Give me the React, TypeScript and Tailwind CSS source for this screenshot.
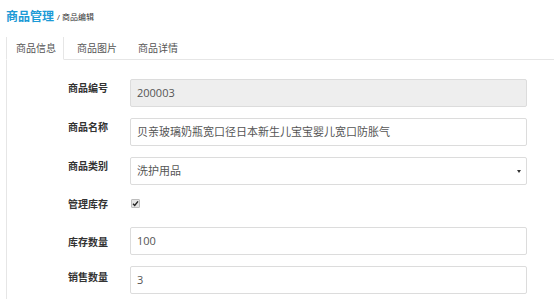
import React from "react";

const font = { fontFamily: '"Open Sans", "Noto Sans CJK SC", sans-serif' };

function Label({ text, pt }: { text: string; pt: string }) {
  return (
    <div className={`ml-[61px] w-[62px] shrink-0 text-[10px] leading-[14px] font-bold text-[#333] ${pt}`}>
      {text}
    </div>
  );
}

export default function App() {
  return (
    <div className="w-[554px] h-[299px] overflow-hidden bg-white" style={font}>
      <div className="h-[37px] pl-[6px] pt-[9px]">
        <div className="flex items-center h-[16px]">
          <span className="text-[12px] leading-[16px] font-bold text-[#1c9ad6]">商品管理</span>
          <span className="ml-[3px] text-[8px] leading-[16px] text-[#333]">/ 商品编辑</span>
        </div>
      </div>
      <ul className="ml-[6px] flex border-b border-[#e6e6e6] h-[23px]">
        <li className="w-[58px] h-[23px] -mb-px border-x border-b border-[#e6e6e6] border-b-white bg-white pl-[9px] text-[10px] leading-[22px] text-[#555]">
          商品信息
        </li>
        <li className="ml-[3px] w-[58px] h-[22px] pl-[10px] text-[10px] leading-[22px] text-[#555]">
          商品图片
        </li>
        <li className="ml-[3px] w-[58px] h-[22px] pl-[10px] text-[10px] leading-[22px] text-[#555]">
          商品详情
        </li>
      </ul>
      <div className="ml-[6px] border-l border-[#e6e6e6] pt-[19px] h-[260px]">
        <div className="flex h-[28px] mb-[11px]">
          <Label text="商品编号" pt="pt-[2px]" />
          <div className="w-[397px] h-[28px] border border-[#dcdcdc] rounded-[2px] bg-[#eeeeee] pl-[6px] text-[11px] leading-[26px] text-[#555]">
            200003
          </div>
        </div>
        <div className="flex h-[28px] mb-[11px]">
          <Label text="商品名称" pt="pt-[2px]" />
          <div className="w-[397px] h-[28px] border border-[#dcdcdc] rounded-[2px] bg-white pl-[6px] text-[11px] leading-[26px] text-[#555]">
            贝亲玻璃奶瓶宽口径日本新生儿宝宝婴儿宽口防胀气
          </div>
        </div>
        <div className="flex h-[28px] mb-[11px]">
          <Label text="商品类别" pt="pt-[2px]" />
          <div className="relative w-[397px] h-[28px] border border-[#dcdcdc] rounded-[2px] bg-white pl-[6px] text-[11px] leading-[26px] text-[#555]">
            洗护用品
            <span className="absolute right-[5px] top-[12px] w-0 h-0 border-l-[2.5px] border-r-[2.5px] border-t-[3px] border-l-transparent border-r-transparent border-t-[#333]" />
          </div>
        </div>
        <div className="flex h-[20px] mb-[11px]">
          <Label text="管理库存" pt="pt-[1px]" />
          <div className="pt-[3px] pl-[1px]">
            <span className="flex items-center justify-center w-[9px] h-[9px] rounded-[1px] border border-[#bdbdbd] bg-[#e4e4e4]">
              <svg width="7" height="7" viewBox="0 0 7 7">
                <path d="M1 3.8 L2.7 5.5 L6 1.4" fill="none" stroke="#222" strokeWidth="1.4" />
              </svg>
            </span>
          </div>
        </div>
        <div className="flex h-[28px] mb-[11px]">
          <Label text="库存数量" pt="pt-[8px]" />
          <div className="w-[397px] h-[28px] border border-[#dcdcdc] rounded-[2px] bg-white pl-[6px] text-[11px] leading-[26px] text-[#555]">
            100
          </div>
        </div>
        <div className="flex h-[28px] mb-[11px]">
          <Label text="销售数量" pt="pt-[4px]" />
          <div className="w-[397px] h-[28px] border border-[#dcdcdc] rounded-[2px] bg-white pl-[6px] text-[11px] leading-[26px] text-[#555]">
            3
          </div>
        </div>
      </div>
    </div>
  );
}
